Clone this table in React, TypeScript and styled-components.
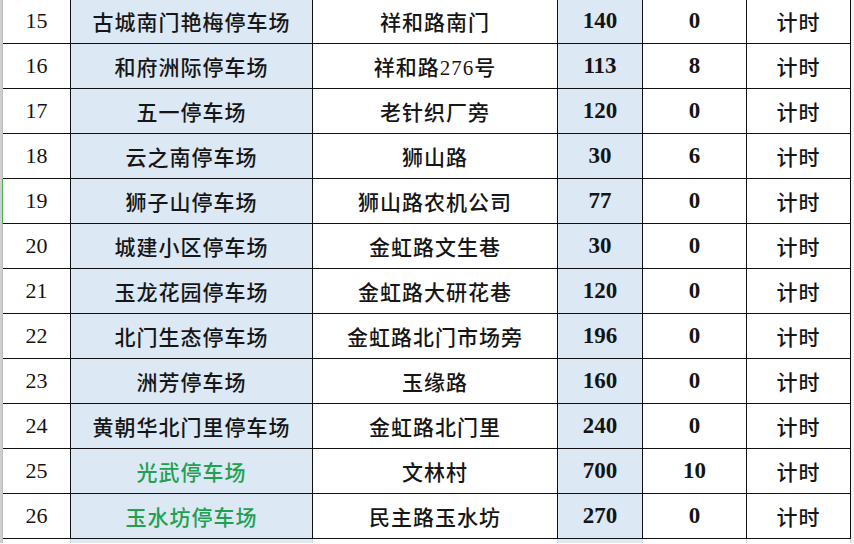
import styled, { createGlobalStyle } from 'styled-components'

const GlobalStyle = createGlobalStyle`
  html, body {
    margin: 0;
    padding: 0;
    background: #ffffff;
    overflow: hidden;
  }
`

type Lot = {
  no: number
  name: string
  place: string
  spaces: number
  extra: number
  fee: string
  green?: boolean
}

const lots: Lot[] = [
  { no: 15, name: '古城南门艳梅停车场', place: '祥和路南门', spaces: 140, extra: 0, fee: '计时' },
  { no: 16, name: '和府洲际停车场', place: '祥和路276号', spaces: 113, extra: 8, fee: '计时' },
  { no: 17, name: '五一停车场', place: '老针织厂旁', spaces: 120, extra: 0, fee: '计时' },
  { no: 18, name: '云之南停车场', place: '狮山路', spaces: 30, extra: 6, fee: '计时' },
  { no: 19, name: '狮子山停车场', place: '狮山路农机公司', spaces: 77, extra: 0, fee: '计时' },
  { no: 20, name: '城建小区停车场', place: '金虹路文生巷', spaces: 30, extra: 0, fee: '计时' },
  { no: 21, name: '玉龙花园停车场', place: '金虹路大研花巷', spaces: 120, extra: 0, fee: '计时' },
  { no: 22, name: '北门生态停车场', place: '金虹路北门市场旁', spaces: 196, extra: 0, fee: '计时' },
  { no: 23, name: '洲芳停车场', place: '玉缘路', spaces: 160, extra: 0, fee: '计时' },
  { no: 24, name: '黄朝华北门里停车场', place: '金虹路北门里', spaces: 240, extra: 0, fee: '计时' },
  { no: 25, name: '光武停车场', place: '文林村', spaces: 700, extra: 10, fee: '计时', green: true },
  { no: 26, name: '玉水坊停车场', place: '民主路玉水坊', spaces: 270, extra: 0, fee: '计时', green: true },
]

const COLS = '3px 68px 242px 245px 85px 104px 104px 1fr'

const Sheet = styled.div`
  width: 854px;
  height: 544px;
  overflow: hidden;
  display: flex;
  flex-direction: column;
  margin-top: -1px;
  font-family: 'Liberation Serif', 'Noto Sans CJK SC', serif;
  color: #141414;
`

const Row = styled.div<{ $open?: boolean }>`
  display: grid;
  grid-template-columns: ${COLS};
  height: ${({ $open }) => ($open ? '10px' : '45px')};
  flex: none;
`

const Gutter = styled.div<{ $active?: boolean }>`
  background: #cfcfcf;
  border-right: 1px solid ${({ $active }) => ($active ? '#4caf50' : '#bdbdbd')};
  box-sizing: border-box;
`

const Cell = styled.div<{ $blue?: boolean; $open?: boolean }>`
  box-sizing: border-box;
  display: flex;
  align-items: center;
  justify-content: center;
  white-space: nowrap;
  background: ${({ $blue }) => ($blue ? '#dce8f4' : '#ffffff')};
  border-right: 1px solid ${({ $open }) => ($open ? '#d6d6d6' : '#111111')};
  border-bottom: ${({ $open }) => ($open ? 'none' : '1px solid #111111')};
`

const Edge = styled.div`
  background: #f3f3f3;
`

const Num = styled.span`
  font-size: 22px;
  font-weight: 400;
`

const Label = styled.span<{ $green?: boolean }>`
  font-size: 21px;
  font-weight: 500;
  letter-spacing: 1px;
  color: ${({ $green }) => ($green ? '#22a052' : '#161616')};
`

const Figure = styled.span`
  font-size: 23px;
  font-weight: 700;
`

export default function App() {
  return (
    <>
      <GlobalStyle />
      <Sheet>
        {lots.map((lot) => (
          <Row key={lot.no}>
            <Gutter $active={lot.no === 19} />
            <Cell>
              <Num>{lot.no}</Num>
            </Cell>
            <Cell $blue>
              <Label $green={lot.green}>{lot.name}</Label>
            </Cell>
            <Cell>
              <Label>{lot.place}</Label>
            </Cell>
            <Cell $blue>
              <Figure>{lot.spaces}</Figure>
            </Cell>
            <Cell>
              <Figure>{lot.extra}</Figure>
            </Cell>
            <Cell>
              <Label>{lot.fee}</Label>
            </Cell>
            <Edge />
          </Row>
        ))}
        <Row $open>
          <Gutter />
          <Cell $open />
          <Cell $open $blue />
          <Cell $open />
          <Cell $open $blue />
          <Cell $open />
          <Cell $open />
          <Edge />
        </Row>
      </Sheet>
    </>
  )
}
